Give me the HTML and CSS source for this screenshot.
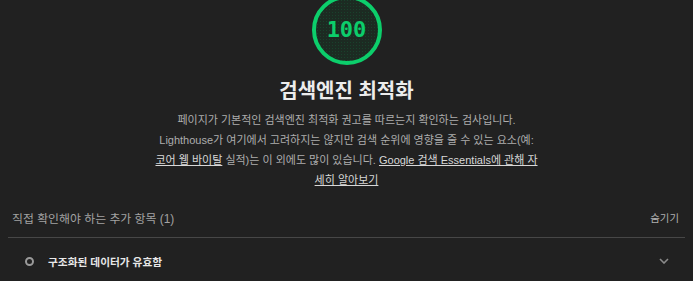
FILE: index.html
```html
<!DOCTYPE html>
<html lang="ko">
<head>
    <meta charset="UTF-8">
    <meta name="viewport" content="width=device-width, initial-scale=1.0">
    <title>검색엔진 최적화</title>
    <link rel="stylesheet" href="styles.css">
</head>
<body>
    <div class="category">
        <div class="category-head">
            <div class="gauge"><span>100</span></div>
            <h2 class="title">검색엔진 최적화</h2>
            <p class="desc">
                페이지가 기본적인 검색엔진 최적화 권고를 따르는지 확인하는 검사입니다.<br>
                Lighthouse가 여기에서 고려하지는 않지만 검색 순위에 영향을 줄 수 있는 요소(예:<br>
                <a href="#">코어 웹 바이탈</a> 실적)는 이 외에도 많이 있습니다. <a href="#">Google 검색 Essentials에 관해 자<br>세히 알아보기</a>
            </p>
        </div>

        <div class="group">
            <div class="group-head">
                <span class="group-title">직접 확인해야 하는 추가 항목 (1)</span>
                <span class="group-toggle">숨기기</span>
            </div>
            <div class="audit">
                <span class="audit-icon"></span>
                <span class="audit-title">구조화된 데이터가 유효함</span>
                <svg class="chevron" width="10" height="6" viewBox="0 0 10 6">
                    <path d="M1 1 L5 5 L9 1" fill="none" stroke="#8a8a8a" stroke-width="1.6"/>
                </svg>
            </div>
        </div>
    </div>
</body>
</html>
```

FILE: styles.css
```css
html, body { margin: 0; background-color: #212121; }

body {
    font-family: "Liberation Sans", "Noto Sans CJK KR", sans-serif;
    color: #e6e6e6;
    overflow: hidden;
}

.category-head {
    display: flex;
    flex-direction: column;
    align-items: center;
}

.gauge {
    box-sizing: border-box;
    width: 70px;
    height: 70px;
    margin-top: -5px;
    border: 4px solid #0cce6b;
    border-radius: 50%;
    background-color: #1c2b22;
    background-image: radial-gradient(rgba(12, 206, 107, 0.14) 0.6px, transparent 0.8px);
    background-size: 3px 3px;
    display: flex;
    align-items: center;
    justify-content: center;
}

.gauge span {
    font-family: "DejaVu Sans Mono", monospace;
    font-size: 22px;
    font-weight: bold;
    color: #0cce6b;
    margin-top: -2px;
}

.title {
    margin: 14px 0 0;
    font-size: 20px;
    line-height: 24px;
    font-weight: bold;
    color: #ececec;
}

.desc {
    margin: 7px 0 0;
    font-size: 11px;
    line-height: 20px;
    color: #adadad;
    text-align: center;
    white-space: nowrap;
}

.desc a {
    color: #d8d8d8;
    text-decoration: underline;
}

.group {
    margin: 17px 8px 0;
}

.group-head {
    display: flex;
    justify-content: space-between;
    align-items: center;
    height: 20px;
    padding: 0 6px 10px 4px;
    border-bottom: 1px solid #474747;
}

.group-title {
    font-size: 11.9px;
    color: #a3a3a3;
}

.group-toggle {
    font-size: 10.4px;
    color: #b0b0b0;
}

.audit {
    display: flex;
    align-items: center;
    height: 24px;
    margin-top: 11px;
    padding: 0 16px 0 17px;
}

.audit-icon {
    box-sizing: border-box;
    width: 9px;
    height: 9px;
    border: 2px solid #9a9a9a;
    border-radius: 50%;
}

.audit-title {
    flex: 1;
    margin-left: 14px;
    font-size: 10.7px;
    font-weight: bold;
    color: #e8e8e8;
}
```
